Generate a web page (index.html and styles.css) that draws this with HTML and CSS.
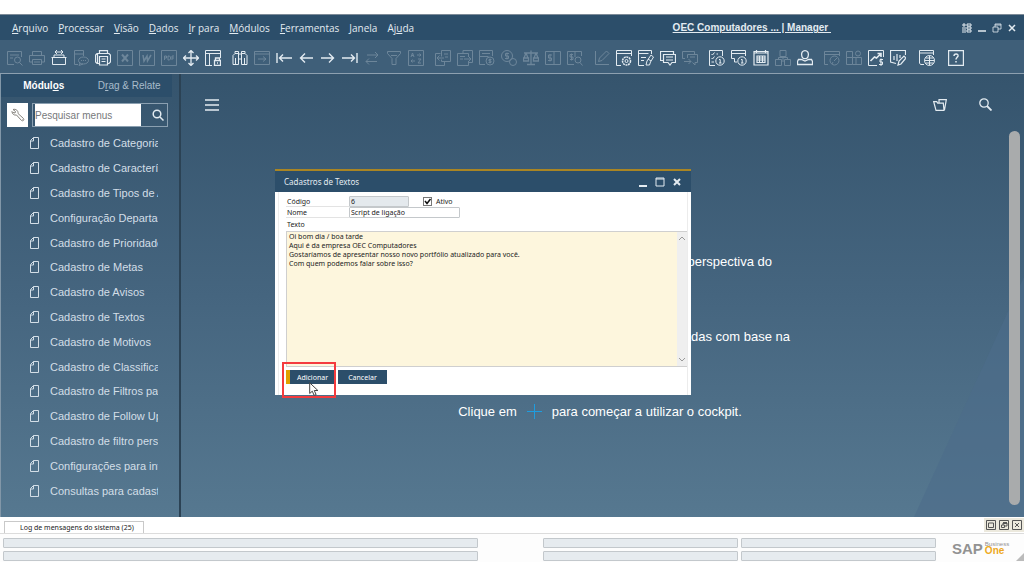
FILE: index.html
```html
<!DOCTYPE html>
<html lang="pt-BR">
<head>
<meta charset="utf-8">
<meta name="viewport" content="width=device-width, initial-scale=1">
<title>OEC Computadores</title>
<link rel="stylesheet" href="styles.css">
</head>
<body>
<header class="menubar">
  <nav class="menus">
    <a href="#"><u>A</u>rquivo</a><a href="#"><u>P</u>rocessar</a><a href="#"><u>V</u>isão</a><a href="#"><u>D</u>ados</a><a href="#"><u>I</u>r para</a><a href="#"><u>M</u>ódulos</a><a href="#"><u>F</u>erramentas</a><a href="#"><u>J</u>anela</a><a href="#">Aj<u>u</u>da</a>
  </nav>
  <a class="account" href="#">OEC Computadores ... | Manager&nbsp;</a>
  <div class="window-controls">
    <button aria-label="Layout"><svg viewBox="0 0 10 10"><path d="M0 2h4M2 0v4M0 5h4M0 7h4M0 9h4M5 1h4v2H5zM5 4h4v2H5zM5 7h4v2H5z"/></svg></button>
    <button aria-label="Minimizar"><svg viewBox="0 0 10 10"><path d="M1 8h8" stroke-width="1.500"/></svg></button>
    <button aria-label="Restaurar"><svg viewBox="0 0 10 10"><path d="M1 4h5v5H1zM3 4V1h6v5H6M3 2h6" stroke-width=".8"/></svg></button>
    <button aria-label="Fechar"><svg viewBox="0 0 10 10"><path d="M2 2l6 6M8 2L2 8" stroke-width="1.500"/></svg></button>
  </div>
</header>

<div class="toolbar" role="toolbar" aria-label="Ferramentas">
  <div class="tools">
    <button class="off" aria-label="Visualizar"><svg viewBox="0 0 16 16"><path d="M7 14.500H.5v-13h14V7M3 5h9M3 8h3"/><circle cx="10.500" cy="10" r="3"/><path d="M12.500 12.500l3 3"/></svg></button>
    <button class="off" aria-label="Imprimir"><svg viewBox="0 0 16 16"><path d="M3.500 5V1.500h9V5M3 12H.5V5.500h15V12H13M3.500 9.500h9v5h-9zM5 12h6"/></svg></button>
    <button aria-label="Exportar"><svg viewBox="0 0 16 16"><path d="M.5 7.500h15M1.500 7.500v7h13v-7M3 7V5h10v2M4 2h8M6 0L4 2l2 2M10 0l2 2-2 2"/></svg></button>
    <button class="off" aria-label="Mensagem"><svg viewBox="0 0 16 16"><path d="M5 14.500H1.500v-14h9V6M1.500 4h9"/><ellipse cx="10.500" cy="10.500" rx="5" ry="3.500"/><path d="M7 13l-1 2.500L10 14M8 10.500h1m1 0h1m1 0h1"/></svg></button>
    <button aria-label="Fax"><svg viewBox="0 0 16 16"><path d="M4 13.500H2L.5 12V5L2 3.500h12L15.500 5v7L14 13.500h-1M4.500 3V.7h8V3M4.500 6.500h8v8.500h-8zM6.500 9h4M6.500 11.500h4M2.500 4v9" stroke-width="1.200"/></svg></button>
    <button class="off" aria-label="Excel"><svg viewBox="0 0 16 16"><path d="M.5.5h15v15H.5z"/><path d="M5 4.500l6 7M11 4.500l-6 7" stroke-width="2"/></svg></button>
    <button class="off" aria-label="Word"><svg viewBox="0 0 16 16"><path d="M.5.5h15v15H.5z"/><path d="M4 5l1 6 3-5 .5 5L12 5" stroke-width="1.500"/></svg></button>
    <button class="off" aria-label="PDF"><svg viewBox="0 0 16 16"><path d="M.5.5h15v15H.5z"/><path d="M3.500 10V6h2v2h-2M7 6v4h1.500L9.500 9V7L8.500 6zM11 10V6h2M11 8h2"/></svg></button>
    <button aria-label="Mover"><svg viewBox="0 0 16 16"><path d="M8 .5v15M.5 8h15M5.500 3L8 .5 10.500 3M3 5.500L.5 8 3 10.500M13 5.500L15.500 8 13 10.500M5.500 13L8 15.500 10.500 13" stroke-width="1.300"/></svg></button>
    <button aria-label="Bloquear tela"><svg viewBox="0 0 16 16"><path d="M7 15.500H.5v-15h15V8M.5 3.500h15M4.500 3.500v12"/><path d="M9.500 10.500h6v5h-6zM10.500 10.500V8h4v2.500M12 13h1" stroke-width="1.300"/></svg></button>
  </div>
  <div class="tools">
    <button aria-label="Procurar"><svg viewBox="0 0 16 16"><path d="M1 14.500V5.500L3 3.500V1.500h3.500V4h3V1.500H13v2l2 2v9h-5.500V9h-3v5.500zM6.500 4v5M9.500 4v5M3.500 8v6M12.500 8v6M3 3.500h3.500M9.500 3.500H13"/></svg></button>
    <button class="off" aria-label="Adicionar registro"><svg viewBox="0 0 16 16"><path d="M.5 1.500h15v13H.5zM.5 4h15M4 9h8M9 6.500L12 9l-3 2.500"/></svg></button>
    <button aria-label="Primeiro"><svg viewBox="0 0 16 16"><path d="M1 3v10M16 8H3.500M7 4.500L3.500 8 7 11.500" stroke-width="1.400"/></svg></button>
    <button aria-label="Anterior"><svg viewBox="0 0 16 16"><path d="M15 8H2.500M7 3.500L2.500 8 7 12.500" stroke-width="1.400"/></svg></button>
    <button aria-label="Próximo"><svg viewBox="0 0 16 16"><path d="M1 8h12.500M9 3.500L13.500 8 9 12.500" stroke-width="1.400"/></svg></button>
    <button aria-label="Último"><svg viewBox="0 0 16 16"><path d="M15 3v10M0 8h12.500M9 4.500L12.500 8 9 11.500" stroke-width="1.400"/></svg></button>
    <button class="off" aria-label="Alternar"><svg viewBox="0 0 16 16"><path d="M3 5h11M11 2l3 3-3 3M13 11.500H2M5 8.500l-3 3 3 3"/></svg></button>
    <button class="off" aria-label="Filtrar"><svg viewBox="0 0 16 16"><path d="M1.500 1.500h13v2L10 8.500v6H6v-6l-4.500-5zM5 5.500h6"/></svg></button>
    <button class="off" aria-label="Classificar"><svg viewBox="0 0 16 16"><path d="M.5.500h15v15H.5zM3 7l1.500-4L6 7M3.500 5.500h2M9 5h4M11.500 3.500L13 5l-1.500 1.500M7 11H3M4.500 9.500L3 11l1.500 1.500M10 9h3l-3 4h3"/></svg></button>
  </div>
  <div class="tools">
    <button class="off" aria-label="Documento base"><svg viewBox="0 0 16 16"><path d="M5.500 3.500h-5v12h9V12M6.500.5h9v11h-9V9.500M6.500 6.500V.5M9 4h4M10 7h3M2 8h7M4.500 5.500L2 8l2.500 2.500"/></svg></button>
    <button class="off" aria-label="Documento destino"><svg viewBox="0 0 16 16"><path d="M6 3.500V.5h9.500v12H12M11.500 7V3.500H.5v12h11V11M3 6.500h5M3 9h3M7 9h7M11.500 6.500L14 9l-2.500 2.500"/></svg></button>
    <button class="off" aria-label="Lucro bruto"><svg viewBox="0 0 16 16"><path d="M6 14.500H.5v-14h13V6M3 3.500h8M.5 6.500h9"/><circle cx="11" cy="11" r="4"/><path d="M12.500 9.500H10V11h2v1.500H9.500M11 8.500v5"/></svg></button>
    <button class="off" aria-label="Pagamento"><svg viewBox="0 0 16 16"><circle cx="6" cy="6" r="5.500"/><path d="M8 3.500H4.500V6h3v2.500H4M6 2.500v7"/><circle cx="12" cy="12" r="3.500"/></svg></button>
    <button class="off" aria-label="Balança"><svg viewBox="0 0 16 16"><path d="M8 .5v14M4 14.500h8M1 3h14M3 3L1 8M3 3l2 5M13 3l-2 5M13 3l2 5M.5 8h5v3h-5zM10.500 8h5v3h-5z" stroke-width="1.300"/></svg></button>
    <button class="off" aria-label="Contas"><svg viewBox="0 0 16 16"><path d="M.5 1.500h15v13H.5zM9 1.500v13M7 5H3.500v3H6.500v2.500H3M5 4v7.500"/></svg></button>
    <button class="off" aria-label="Consultar contas"><svg viewBox="0 0 16 16"><path d="M7 14.500H.5v-13h14V6M8 1.500V7M6 4.500H3V7h3v2.500H3M4.500 3.500v7"/><circle cx="11" cy="10" r="3"/><path d="M13 12.500l2.500 3"/></svg></button>
  </div>
  <div class="tools">
    <button class="off" aria-label="Editar"><svg viewBox="0 0 16 16"><path d="M1.500 1v13.500H15M4.500 11.500l1-3.500 7-7 2.500 2.500-7 7z"/></svg></button>
    <button aria-label="Configurar formulário"><svg viewBox="0 0 16 16"><path d="M5 15.500H.5V.5h15V6M.5 3.500h15"/><circle cx="10.500" cy="11" r="4" stroke-width="1.500" stroke-dasharray="2 .6"/><circle cx="10.500" cy="11" r="1.500"/></svg></button>
    <button aria-label="Editar formulário"><svg viewBox="0 0 16 16"><path d="M6 15.500H.5V.5h13V4M.5 3.500h10M3 7.500h5M3 10.500h3M8 15l1-4 4-6 2.500 2-3 5-1 3zM10 9l3 2"/></svg></button>
    <button aria-label="Mensagens"><svg viewBox="0 0 16 16"><path d="M3 10.500H.5v-9h13V4M3.500 4.500h12v8H12l-2 2.500-2-2.500H3.500zM6 7h7M6 10h7" stroke-width="1.200"/></svg></button>
    <button class="off" aria-label="Encaminhar"><svg viewBox="0 0 16 16"><path d="M3 8.500H.5v-7h12V4M5.500 8V4.500h10v8H13V15l-2.500-2.500M2 11.500h7M6.500 9L9 11.500 6.500 14M8 7h5"/></svg></button>
  </div>
  <div class="tools">
    <button aria-label="Tarefas"><svg viewBox="0 0 16 16"><path d="M6 15.500H.5V.5h13V6M2.500 4l1 1 2-2.500M2.500 8l1 1 2-2.500M7.500 4H9M2.500 12H5"/><circle cx="11" cy="11" r="4.200"/><path d="M10 9.500h1.200V13M10 13h2.500"/></svg></button>
    <button aria-label="Alertas"><svg viewBox="0 0 16 16"><path d="M3.500 8.500H.5v-8h14V6M.5 3.500h14M3.500 8.500V12H6"/><circle cx="11" cy="11" r="4.200"/><path d="M10 9.500h1.200V13M10 13h2.500"/></svg></button>
    <button aria-label="Calendário"><svg viewBox="0 0 16 16"><path d="M1 1.500h14v13.500H1zM3.500 0v3M12.500 0v3M1 3h14M4 6h8v6.500H4zM4 8h8M4 10h8M6.500 6v6.500M9.500 6v6.500" stroke-width="1.200"/></svg></button>
    <button class="off" aria-label="Organograma"><svg viewBox="0 0 16 16"><path d="M5 .5h6v6H5zM.5 9.500h6v6h-6zM9.500 9.500h6v6h-6zM8 6.500V12M3.500 9.500v-2h9v2"/></svg></button>
    <button aria-label="Usuário"><svg viewBox="0 0 16 16"><path d="M8 .7c5 0 4 8 0 8s-5-8 0-8zM4.500 9.500h-3l-1 2v3h15v-3l-1-2h-3L8 11z" stroke-width="1.300"/></svg></button>
  </div>
  <div class="tools">
    <button class="off" aria-label="Painel"><svg viewBox="0 0 16 16"><path d="M4 14.500H.5v-13h15V6M.5 4.500h15"/><circle cx="10.500" cy="10.500" r="4.500"/><path d="M10 11l3-3M8 14l1-2"/></svg></button>
    <button class="off" aria-label="Widgets"><svg viewBox="0 0 16 16"><path d="M.5 1.500h6v6h-6zM.5 7.500h6v7h-6zM6.500 7.500h9v7h-9M10 7.500v7"/><circle cx="12" cy="3.500" r="2.500"/></svg></button>
    <button aria-label="Vendas"><svg viewBox="0 0 16 16"><path d="M9 15.500H.5V.5h15V7"/><path d="M2.500 11l4-4 2 1 4-4M9.500 3.500h3.500V7" stroke-width="1.600"/><path d="M15 9.500h-3v2.500h2.500v2.500H11M13 8.500v7.500"/></svg></button>
    <button aria-label="Relatórios"><svg viewBox="0 0 16 16"><path d="M6 13.500L.5 12V.5h15V5M4 6v4M7 4v7M10 5v3M8 15l1-4 5-5 2 2-5 6z" stroke-width="1.200"/></svg></button>
  </div>
  <div class="tools spaced"><button aria-label="Navegador"><svg viewBox="0 0 16 16"><path d="M5 14.500H1.500L.5 13V.5h14V5M.5 3h14"/><circle cx="10.500" cy="10.500" r="5"/><path d="M5.500 10.500h10M10.500 5.500v10M6.500 8h8M6.500 13h8"/></svg></button></div>
  <div class="tools spaced"><button aria-label="Ajuda"><svg viewBox="0 0 16 16"><path d="M.6.6h14.800v14.800H.6z" stroke-width="1.200"/><path d="M6 6c0-3 4.500-2.500 4 0-.3 1.200-2 1.500-2 3.500M8 11v1.500" stroke-width="1.500"/></svg></button></div>
</div>

<div class="workspace">
  <aside class="sidebar">
    <div class="side-tabs">
      <button class="active"><span>Módul<u>o</u>s</span></button>
      <button><span>D<u>r</u>ag &amp; Relate</span></button>
    </div>
    <div class="side-search">
      <button class="wrench" aria-label="Configurar menu"><svg viewBox="0 0 14 14"><path d="M2 1.500l2.500 2L4 5 2 4.500l-1-1C1 6 3 7.500 5.500 7l5 5.500c1.500 1 3-.5 2-2L7 5.500C7.500 3 5 .5 2 1.500zM11 11l.5.5"/></svg></button>
      <div class="search-box">
        <input type="text" aria-label="Pesquisar menus" placeholder="Pesquisar menus">
        <button aria-label="Pesquisar"><svg viewBox="0 0 12 12"><circle cx="5" cy="5" r="3.800"/><path d="M8 8l3.500 3.500"/></svg></button>
      </div>
    </div>
    <ul class="modules">
      <li><a href="#"><svg viewBox="0 0 9 12"><path d="M3.500.5h5v11h-8v-8zV4H.5"/></svg><span>Cadastro de Categorias</span></a></li>
      <li><a href="#"><svg viewBox="0 0 9 12"><path d="M3.500.5h5v11h-8v-8zV4H.5"/></svg><span>Cadastro de Características</span></a></li>
      <li><a href="#"><svg viewBox="0 0 9 12"><path d="M3.500.5h5v11h-8v-8zV4H.5"/></svg><span>Cadastro de Tipos de Atividades</span></a></li>
      <li><a href="#"><svg viewBox="0 0 9 12"><path d="M3.500.5h5v11h-8v-8zV4H.5"/></svg><span>Configuração Departamentos</span></a></li>
      <li><a href="#"><svg viewBox="0 0 9 12"><path d="M3.500.5h5v11h-8v-8zV4H.5"/></svg><span>Cadastro de Prioridades</span></a></li>
      <li><a href="#"><svg viewBox="0 0 9 12"><path d="M3.500.5h5v11h-8v-8zV4H.5"/></svg><span>Cadastro de Metas</span></a></li>
      <li><a href="#"><svg viewBox="0 0 9 12"><path d="M3.500.5h5v11h-8v-8zV4H.5"/></svg><span>Cadastro de Avisos</span></a></li>
      <li><a href="#"><svg viewBox="0 0 9 12"><path d="M3.500.5h5v11h-8v-8zV4H.5"/></svg><span>Cadastro de Textos</span></a></li>
      <li><a href="#"><svg viewBox="0 0 9 12"><path d="M3.500.5h5v11h-8v-8zV4H.5"/></svg><span>Cadastro de Motivos</span></a></li>
      <li><a href="#"><svg viewBox="0 0 9 12"><path d="M3.500.5h5v11h-8v-8zV4H.5"/></svg><span>Cadastro de Classificação</span></a></li>
      <li><a href="#"><svg viewBox="0 0 9 12"><path d="M3.500.5h5v11h-8v-8zV4H.5"/></svg><span>Cadastro de Filtros para</span></a></li>
      <li><a href="#"><svg viewBox="0 0 9 12"><path d="M3.500.5h5v11h-8v-8zV4H.5"/></svg><span>Cadastro de Follow Up</span></a></li>
      <li><a href="#"><svg viewBox="0 0 9 12"><path d="M3.500.5h5v11h-8v-8zV4H.5"/></svg><span>Cadastro de filtro personalizado</span></a></li>
      <li><a href="#"><svg viewBox="0 0 9 12"><path d="M3.500.5h5v11h-8v-8zV4H.5"/></svg><span>Configurações para integração</span></a></li>
      <li><a href="#"><svg viewBox="0 0 9 12"><path d="M3.500.5h5v11h-8v-8zV4H.5"/></svg><span>Consultas para cadastro</span></a></li>
    </ul>
  </aside>

  <main class="cockpit">
    <div class="cockpit-bar">
      <button aria-label="Menu"><svg width="14" height="12" viewBox="0 0 14 12"><path d="M0 1h14M0 6h14M0 11h14" stroke-width="1.500"/></svg></button>
      <div class="cockpit-actions">
        <button aria-label="Abrir"><svg width="14" height="12" viewBox="0 0 14 12"><path d="M3 11.300L.7 2.700h3l1 1.500h5.600L11 11.300zM6 3.500V.7h7.300L11.500 11" stroke-width="1.200"/></svg></button>
        <button aria-label="Pesquisar"><svg width="13" height="13" viewBox="0 0 13 13"><circle cx="5" cy="5" r="4.200" stroke-width="1.300"/><path d="M8 8l4.500 4.500" stroke-width="1.800"/></svg></button>
      </div>
    </div>
    <div class="welcome">
      <p class="wide">perspectiva do</p>
      <p class="wider">adas com base na</p>
      <p>Clique em <svg width="15" height="15" viewBox="0 0 15 15"><path d="M7.500 0v15M0 7.500h15"/></svg> para começar a utilizar o cockpit.</p>
    </div>
    <div class="scroll-thumb"></div>
  </main>

  <section class="dialog" role="dialog" aria-labelledby="dialog-title">
    <header class="dialog-title">
      <h1 id="dialog-title">Cadastros de Textos</h1>
      <div class="dialog-controls">
        <button aria-label="Minimizar"><svg viewBox="0 0 10 10"><path d="M1 9h8" stroke-width="2"/></svg></button>
        <button aria-label="Maximizar"><svg viewBox="0 0 10 10"><path d="M1 1h8v8H1zM1 2h8"/></svg></button>
        <button aria-label="Fechar"><svg viewBox="0 0 10 10"><path d="M2 2l6 6M8 2L2 8" stroke-width="2"/></svg></button>
      </div>
    </header>
    <form class="dialog-body">
      <div class="field"><label for="code">Código</label><input id="code" class="code" type="text" value="6" readonly><label class="check"><input type="checkbox" checked><svg viewBox="0 0 9 9"><path d="M2 4l2 2.500L7.500 2"/></svg>Ativo</label></div>
      <div class="field"><label for="name">Nome</label><input id="name" class="name" type="text" value="Script de ligação"></div>
      <label class="text-label" for="text">Texto</label>
      <div class="editor">
        <textarea id="text" autofocus>Oi bom dia / boa tarde
Aqui é da empresa OEC Computadores
Gostaríamos de apresentar nosso novo portfólio atualizado para você.
Com quem podemos falar sobre isso?</textarea>
        <div class="editor-scroll"><svg viewBox="0 0 8 5"><path d="M1 4l3-3 3 3"/></svg><svg viewBox="0 0 8 5"><path d="M1 1l3 3 3-3"/></svg></div>
      </div>
      <div class="actions">
        <button class="primary" type="button">Adicionar</button>
        <button type="button">Cancelar</button>
      </div>
    </form>
    <div class="highlight"></div>
    <svg class="pointer" viewBox="0 0 10 14"><path d="M.7.800v10.700l2.600-2.300 1.800 4.200 2-.8-1.800-4.100h3.600z"/></svg>
  </section>
</div>

<footer class="footer">
  <div class="log">
    <button class="log-tab">Log de mensagens do sistema (25)</button>
    <div class="log-controls">
      <button aria-label="Maximizar"><svg viewBox="0 0 10 10"><path d="M.5.5h9v9h-9zM2.500 3h5v4.500h-5z"/></svg></button>
      <button aria-label="Restaurar"><svg viewBox="0 0 10 10"><path d="M.5.5h9v9h-9zM2.500 5h3v2.500h-3zM4 5V3h4v3H5.500"/><path d="M4 3h4" stroke-width="2"/></svg></button>
      <button aria-label="Fechar"><svg viewBox="0 0 10 10"><path d="M.5.5h9v9h-9zM3 3l4 4M7 3L3 7"/></svg></button>
    </div>
  </div>
  <div class="status">
    <div class="cells long"><span></span><span></span></div>
    <div class="cells"><span></span><span></span></div>
    <div class="cells"><span></span><span></span></div>
    <div class="brand"><b>SAP</b><span class="product"><span>Business</span><strong>One</strong></span></div>
    <svg class="grip" viewBox="0 0 8 8"><path d="M8 0v8H0z"/></svg>
  </div>
</footer>
</body>
</html>
```
FILE: styles.css
```css
* { box-sizing: border-box; }

body {
  margin: 0;
  padding: 14px 0;
  min-height: 100vh;
  display: flex;
  flex-direction: column;
  background: #fff;
  color: #e3ebf1;
  font-family: "Liberation Sans", Arial, sans-serif;
  font-size: 11px;
}

button, input, textarea { font: inherit; color: inherit; }
button { display: flex; align-items: center; justify-content: center; margin: 0; padding: 0; border: 0; background: none; }
a { color: inherit; text-decoration: none; }
svg { display: block; flex: none; fill: none; stroke: currentColor; }

/* Menu bar */
.menubar {
  display: flex;
  align-items: center;
  height: 26px;
  padding: 0 7px 0 12px;
  border-top: 1px solid #7d8b98;
  background: #2c4e6a;
}
.menus { display: flex; gap: 10px; flex: 1; font-family: "Open Sans", "Noto Sans", sans-serif; font-size: 10px; white-space: nowrap; }
.account { margin-right: 131px; font-size: 10px; font-weight: bold; text-decoration: underline; }
.window-controls { display: flex; gap: 5px; }
.window-controls svg { width: 10px; height: 10px; }

/* Toolbar */
.toolbar {
  display: flex;
  align-items: center;
  gap: 5px;
  height: 34px;
  padding: 2px 0 0 4px;
  border-bottom: 1px solid #8da0b0;
  background: #3f5f79;
}
.tools { display: flex; }
.tools.spaced { margin-left: 2px; }
.tools button { width: 22px; height: 22px; }
.tools svg { width: 16px; height: 16px; }
.tools .off { opacity: .28; }

/* Workspace */
.workspace { position: relative; flex: 1; display: flex; background: linear-gradient(#35546d, #45657f 50%, #567890); }
.sidebar {
  display: flex;
  flex-direction: column;
  width: 181px;
  padding-bottom: 14px;
  border-left: 1px solid #8297a8;
  border-right: 2px solid #2b4254;
}
.side-tabs { display: flex; height: 23px; margin-right: 7px; background: #2c4e6a; font-size: 10px; }
.side-tabs button { flex: 1; color: #a9bccb; }
.side-tabs .active { color: #fff; font-weight: bold; }
.side-search { display: flex; gap: 4px; height: 34px; padding: 6px 11px 4px 6px; }
.wrench { width: 21px; background: #fff; color: #85827c; }
.wrench svg { width: 14px; height: 14px; }
.search-box { flex: 1; display: flex; min-width: 0; padding-left: 2px; border: 1px solid #8ba0b1; }
.search-box input { flex: 1; min-width: 0; padding: 0; border: 0; background: #fff; color: #222; font-size: 10px; }
.search-box input::placeholder { color: #77797b; opacity: 1; }
.search-box button { width: 26px; padding-left: 8px; }
.search-box svg { width: 12px; height: 12px; stroke-width: 1.500; }
.modules { flex: 1; display: grid; grid-auto-rows: 1fr; margin: 0; padding: 0 21px 0 29px; list-style: none; }
.modules li { display: flex; align-items: center; min-width: 0; color: #d3dee7; }
.modules a { flex: 1; display: flex; gap: 11px; min-width: 0; }
.modules span { overflow: hidden; white-space: nowrap; }
.modules svg { width: 9px; height: 12px; }

.cockpit { position: relative; flex: 1; display: flex; flex-direction: column; }
.cockpit::before {
  content: "";
  position: absolute;
  right: 0;
  bottom: 0;
  width: 110px;
  height: 240px;
  background: #4c6d8a;
  clip-path: polygon(100% 0, 100% 100%, 0 100%);
  opacity: .6;
}
.cockpit-bar { display: flex; justify-content: space-between; padding: 24px 32px 0 24px; }
.cockpit-actions { display: flex; gap: 32px; }
.welcome { display: flex; flex-direction: column; align-items: center; gap: 55px; margin: auto 5px 96px 0; font-size: 13px; color: #fff; }
.welcome p { display: flex; align-items: center; justify-content: flex-end; gap: 10px; height: 20px; margin: 0; white-space: nowrap; }
.welcome .wide { width: 344px; }
.welcome .wider { width: 380px; }
.welcome svg { color: #1d9de0; }
.scroll-thumb { position: absolute; top: 57px; right: 4px; bottom: 12px; width: 11px; border-radius: 6px; background: #a9abac; }

/* Dialog */
.dialog {
  position: absolute;
  top: 95px;
  left: 275px;
  width: 416px;
  background: #fff;
  color: #222;
  font-family: "Noto Sans", sans-serif;
  font-size: 7px;
}
.dialog-title { display: flex; align-items: center; justify-content: space-between; height: 23px; padding: 0 9px; border-top: 2px solid #a98524; background: #2c4e6a; color: #e3ebf1; }
.dialog-title h1 { margin: 0; font-size: 8px; font-weight: normal; }
.dialog-controls { display: flex; gap: 7px; }
.dialog-controls svg { width: 10px; height: 10px; }
.dialog-body { display: block; margin: 0 3px; padding: 4px 0 8px 7px; border: solid #ececec; border-width: 0 1px; }
.field { display: flex; align-items: center; height: 11px; }
.field > label:first-child { width: 63px; padding-left: 1px; border-bottom: 1px solid #e3e3e3; }
.field input[type="text"] { height: 11px; padding: 0 0 0 1px; border: 1px solid #c4c8cb; border-radius: 1px; background: #fff; }
.field input.code { width: 60px; background: #e4e9ed; }
.field input.name { width: 111px; }
.check { position: relative; display: flex; align-items: center; gap: 4px; margin-left: 14px; }
.check input { appearance: none; width: 9px; height: 9px; margin: 0; border: 1px solid #777; background: #fff; }
.check svg { position: absolute; left: 0; width: 9px; height: 9px; stroke: #111; stroke-width: 1.500; }
.text-label { display: flex; align-items: center; height: 13px; padding-left: 1px; }
.editor { display: flex; height: 136px; border: 1px solid #cfcfcf; border-width: 1px 0 1px 1px; background: #fdf6dd; }
.editor textarea { flex: 1; min-width: 0; padding: 0 0 0 2px; border: 0; outline: 0; background: none; line-height: 9px; resize: none; overflow: hidden; }
.editor-scroll { display: flex; flex-direction: column; justify-content: space-between; align-items: center; width: 10px; padding: 4px 0; background: #efefef; color: #999; }
.editor-scroll svg { width: 8px; height: 5px; }
.actions { display: flex; gap: 3px; padding: 3px 0; }
.actions button { width: 49px; height: 14px; background: #2c4e6a; color: #fff; }
.actions .primary { border-left: 4px solid #e0a100; }
.highlight { position: absolute; left: 7px; top: 193px; width: 54px; height: 36px; border: 2px solid #f43b3e; }
.pointer { position: absolute; left: 34px; top: 213px; width: 10px; height: 14px; fill: #fff; stroke: #444; }

/* Footer */
.footer { color: #222; font-family: "Noto Sans", sans-serif; font-size: 7px; }
.log { display: flex; justify-content: space-between; align-items: flex-end; height: 17px; padding: 0 0 0 4px; border-bottom: 1px solid #dcdcdc; }
.log-tab { height: 12px; padding: 0 9px 0 15px; border: 1px solid #c9c9c9; border-bottom: 0; }
.log-controls { display: flex; gap: 3px; padding: 2px; margin-bottom: 1px; background: #ece9dd; color: #555; }
.log-controls svg { width: 10px; height: 10px; }
.status { display: flex; align-items: flex-start; gap: 3px; padding: 4px 0 1px 3px; background: #fdfdfd; }
.cells { flex: 195; display: grid; gap: 3px; }
.cells.long { flex: 476; margin-right: 62px; }
.cells span { height: 10px; border: 1px solid #c3c8cc; border-radius: 1px; background: #e6ebef; }
.brand { display: flex; align-items: center; gap: 2px; width: 74px; height: 20px; padding-left: 13px; color: #929292; font-family: "Liberation Sans", Arial, sans-serif; font-size: 15px; }
.product { display: flex; flex-direction: column; font-size: 6px; line-height: 6px; }
.product strong { color: #eda91d; font-size: 10px; line-height: 8px; }
.grip { align-self: flex-end; width: 8px; height: 8px; fill: #bbb; stroke: none; }
```
